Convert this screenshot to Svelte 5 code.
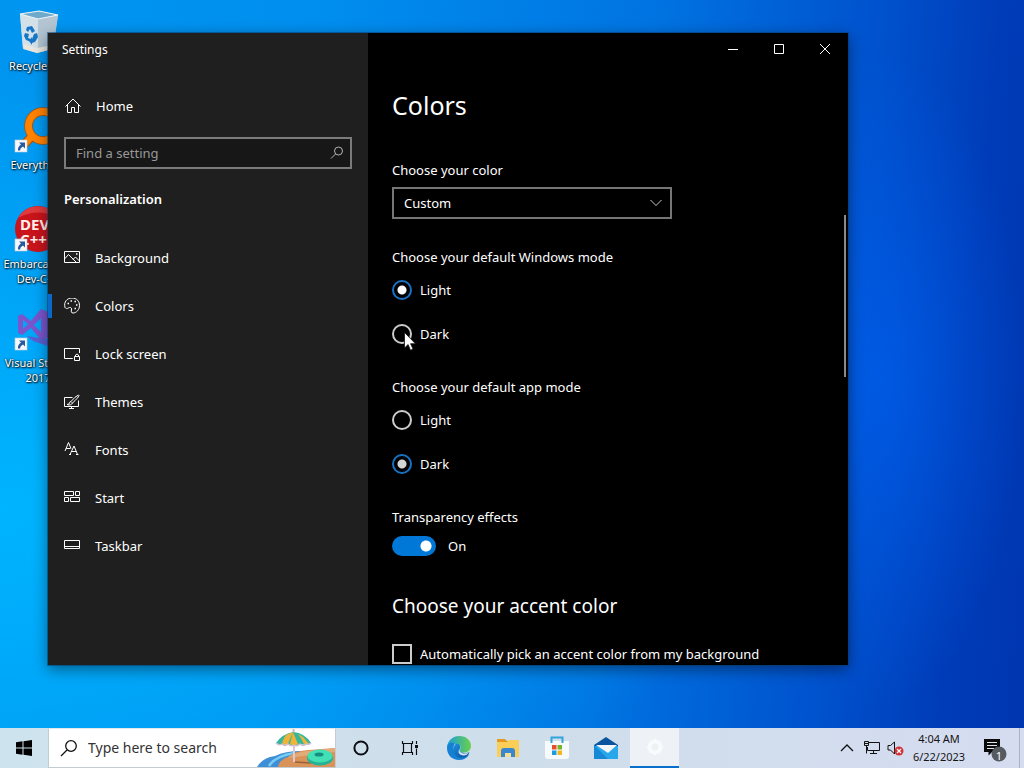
<script>
  let query = $state('');
  let taskQuery = $state('');
  let colorMode = $state('Custom');
  let windowsMode = $state('Light');
  let appMode = $state('Dark');
  let transparency = $state(true);
  let autoAccent = $state(false);

  const nav = ['Background', 'Colors', 'Lock screen', 'Themes', 'Fonts', 'Start', 'Taskbar'];
  const shortcuts = ['Recycle Bin', 'Everything', 'Embarcadero Dev-C++', 'Visual Studio 2017'];
</script>

{#snippet shortcutArrow()}
  <rect x="1" y="34" width="12" height="12" fill="#f6f8fb" stroke="#c3ccd6" stroke-width=".6" />
  <path d="M5 36.500h6v6l-2-2q-3 1.500-3 4h-2q-.5-3.500 3-6z" fill="#26599f" />
{/snippet}

{#snippet modeGroup(title, name, value, set)}
  <fieldset class="group">
    <legend>{title}</legend>
    <div class="choices">
      {#each ['Light', 'Dark'] as option}
        <label class="choice">
          <input type="radio" {name} value={option} checked={value === option} onchange={() => set(option)} />
          <span>{option}</span>
        </label>
      {/each}
    </div>
  </fieldset>
{/snippet}

<div class="screen">
  <main class="desktop">
    <div class="shortcuts">
      {#each shortcuts as name, i}
        <button class="shortcut">
          <svg viewBox="0 0 48 48" width="48" height="48" aria-hidden="true">
            {#if i === 0}
              <g transform="translate(0 2)">
                <path d="M6 5l19-3 19 4-5 34-16 4-14-4z" fill="#c5d5df" />
                <path d="M6 5l18 5v33l-15-4z" fill="#d3e0e8" />
                <path d="M24 10l20-4-5 34-15 3z" fill="#b3c5d2" />
                <path d="M6 5l19-3 19 4-20 4z" fill="#6fa9cc" stroke="#edf5f8" stroke-width="1.200" />
                <path d="M9 35l14 4 16-3-1 4-15 4-13-4z" fill="#e8e6df" />
                <g fill="#1677c9">
                  <path d="M13 18l5-1 3 5-3 2-2-4-2 3-2-2z" />
                  <path d="M11 24l4 1-1 4 3 1v3l-5-2-2-4z" />
                  <path d="M20 25l3-1 1 4-3 5-3 1v2l-3-4 3-4v2z" />
                </g>
              </g>
            {:else if i === 1}
              <circle cx="29" cy="20" r="14.500" fill="none" stroke="#a9500a" stroke-width="8.500" />
              <path d="M19 29L7 42" stroke="#a9500a" stroke-width="9" />
              <circle cx="29" cy="20" r="14.500" fill="none" stroke="#ff8200" stroke-width="7" />
              <path d="M19 29L7 42" stroke="#ff8200" stroke-width="7" />
              {@render shortcutArrow()}
            {:else if i === 2}
              <circle cx="24" cy="24" r="23" fill="#c9141c" />
              <path d="M4 13a23 23 0 0 1 40 0q-20-11-40 0z" fill="#df3a3d" />
              <g class="badge">
                <text x="6" y="25">DEV</text>
                <text x="6" y="40">C++</text>
              </g>
              {@render shortcutArrow()}
            {:else}
              <path fill-rule="evenodd" d="M4 12l4-2 9 7 10-12 10 4v24l-10 3-10-12-9 7-4-2zM9 16v9l5-5zM27 14l-7 7 7 7z" fill="#7a55cc" />
              <path d="M13 32l24 4v7l-18-6z" fill="#5a5fd0" />
              {@render shortcutArrow()}
            {/if}
          </svg>
          <span>{name}</span>
        </button>
      {/each}
    </div>

    <section class="window" aria-label="Settings">
      <aside class="sidebar">
        <div class="caption">Settings</div>
        <button class="home">
          <svg viewBox="0 0 18 18" width="18" height="18" class="line"><path d="M1.500 9.500L9 2l7.500 7.500M3.500 7.500v8h4v-5h3v5h4v-8" /></svg>
          <span>Home</span>
        </button>
        <label class="find">
          <input type="text" placeholder="Find a setting" aria-label="Find a setting" bind:value={query} />
          <svg viewBox="0 0 16 16" width="16" height="16"><circle cx="9.500" cy="6" r="4" fill="none" stroke="#b4b4b4" /><path d="M6.500 9L2 13.500" stroke="#b4b4b4" /></svg>
        </label>
        <h2 class="category">Personalization</h2>
        <nav>
          {#each nav as item}
            <a href="#{item}" class:active={item === 'Colors'}>
              <svg viewBox="0 0 16 16" width="16" height="16" class="line" aria-hidden="true">
                {#if item === 'Background'}
                  <path d="M.5 1.500h15v11H.5zM.5 9l4-4.500 8 8M9 9.500L11.500 7l4 4" /><path d="M12 4h1.500" stroke-width="1.500" />
                {:else if item === 'Colors'}
                  <path d="M1 9.500C-.5 4 3 .0 8 .0s7.500 3.500 7.500 7.500-3 7.500-6.500 7.500c-2 0-2-1.500-1.500-3 .5-1.500-.5-3-2-2.500s-3 2-4.500.0z" />
                  <path d="M3.500 5.500H5M6.500 3H8M10.500 3.500H12M12 7h1.500M10.500 10.500H12" stroke-width="1.700" />
                {:else if item === 'Lock screen'}
                  <path d="M8.500 12.500h-8v-10h15V7M3.500 12.500h5M10.500 10.500h5v4h-5zM11.500 10.500V9q1.500-2 3 0v1.500" />
                {:else if item === 'Themes'}
                  <path d="M8.500 3.500h-8v9h14v-6M7.500 12.500v2M5 14.500h5" />
                  <path d="M14.500 1Q11 2.500 7 7.500l1.500 1.500Q14 4 15 1.500zM7 7.500Q5 8 5 10l-2 .5q4 1.500 5.500-1.500" />
                {:else if item === 'Fonts'}
                  <path d="M1 9L4.500.5 7 6.500M2 6.500h4.500M6 12.500L10 4l3.500 8.500M7.500 9.500h5M5 12.500h2M12 12.500h2.500" />
                {:else if item === 'Start'}
                  <path d="M.5 1.500h9v4h-9zM11.500 1.500h4v4h-4zM.5 7.500h4v4h-4zM6.500 7.500h9v4h-9z" />
                {:else}
                  <path d="M.5 2.500h15v8H.5zM.5 8.500h15" />
                {/if}
              </svg>
              <span>{item}</span>
            </a>
          {/each}
        </nav>
      </aside>

      <div class="pane">
        <div class="controls">
          <button aria-label="Minimize"><svg viewBox="0 0 10 10" width="10" height="10"><path d="M0 5.500h10" /></svg></button>
          <button aria-label="Maximize"><svg viewBox="0 0 10 10" width="10" height="10"><path d="M.5.5h9v9h-9z" /></svg></button>
          <button aria-label="Close"><svg viewBox="0 0 10 10" width="10" height="10"><path d="M0 0l10 10M10 0L0 10" /></svg></button>
        </div>
        <div class="content">
          <h1>Colors</h1>
          <div class="group">
            <label for="color-mode">Choose your color</label>
            <div class="dropdown">
              <select id="color-mode" bind:value={colorMode}>
                <option>Light</option>
                <option>Dark</option>
                <option>Custom</option>
              </select>
              <svg viewBox="0 0 12 8" width="12" height="8"><path d="M.5 1L6 6.500 11.500 1" fill="none" stroke="#c8c8c8" /></svg>
            </div>
          </div>
          {@render modeGroup('Choose your default Windows mode', 'windows-mode', windowsMode, (v) => (windowsMode = v))}
          {@render modeGroup('Choose your default app mode', 'app-mode', appMode, (v) => (appMode = v))}
          <div class="group">
            <span id="transparency">Transparency effects</span>
            <label class="toggle">
              <input type="checkbox" role="switch" aria-labelledby="transparency" bind:checked={transparency} />
              <span>{transparency ? 'On' : 'Off'}</span>
            </label>
          </div>
          <h2>Choose your accent color</h2>
          <label class="check">
            <input type="checkbox" bind:checked={autoAccent} />
            <span>Automatically pick an accent color from my background</span>
          </label>
        </div>
        <div class="scrollbar"></div>
      </div>
    </section>

    <svg class="pointer" viewBox="0 0 12 19" width="12" height="19" aria-hidden="true">
      <path d="M.5.5v15.500l3.600-3.400 2.400 5.600 2.500-1.100-2.400-5.400h4.900z" fill="#fff" stroke="#111" stroke-width=".8" />
    </svg>
  </main>

  <footer class="taskbar">
    <button class="start" aria-label="Start">
      <svg viewBox="0 0 16 16" width="16" height="16"><path d="M0 2.200L6.500 1.300v6.200H0zM7.500 1.200L16 0v7.500H7.500zM0 8.500h6.500v6.200L0 13.800zM7.500 8.500H16V16l-8.500-1.200z" /></svg>
    </button>
    <label class="search">
      <svg viewBox="0 0 18 18" width="18" height="18"><circle cx="11" cy="7" r="5.300" fill="none" stroke="#111" stroke-width="1.300" /><path d="M7 11l-6 6" stroke="#111" stroke-width="1.300" /></svg>
      <input type="text" placeholder="Type here to search" aria-label="Type here to search" bind:value={taskQuery} />
      <svg class="beach" viewBox="0 0 78 38" width="78" height="38" aria-hidden="true">
        <path d="M0 38q5-9 18-11 10-5 26-5l-12 16z" fill="#3f8fd6" />
        <path d="M12 37q6-10 26-13" fill="none" stroke="#79cdf3" stroke-width="2.500" />
        <path d="M21 38q1-7 10-10 6-6 21-7l26-2v19z" fill="#d99257" />
        <path d="M31 29q10-7 21-7l26-3v4z" fill="#e3ab77" />
        <path d="M38 33l16 1" stroke="#98613c" stroke-width="1.500" />
        <path d="M37 13v20" stroke="#e2c6d0" stroke-width="2" />
        <path d="M36.500 0v4" stroke="#cbb7d1" stroke-width="2" />
        <path d="M19 14Q25 5 36 3q12 1 18 11l-5 2-6-1-6 2-6-2-7 1z" fill="#36b79b" />
        <path d="M29 6l7-3-5 12-5 1q-2-3 3-10zM36 3l5 12-4 2-4-2zM41 5l5 3 6 7-5 0q-2-5-6-10z" fill="#efb437" />
        <path d="M19 14q3 3 6 1 3 3 6 0 3 3 6 1 3 2 6-1 3 3 6 0 3 1 5-1" fill="none" stroke="#d0bdce" stroke-width="1.500" />
        <ellipse cx="63" cy="29" rx="13" ry="7.500" fill="#24b394" />
        <ellipse cx="63" cy="27" rx="12.500" ry="6.500" fill="#43dfb5" />
        <ellipse cx="62" cy="25.500" rx="4.500" ry="2" fill="#188e83" />
      </svg>
    </label>
    <div class="apps">
      <button aria-label="Cortana"><svg viewBox="0 0 16 16" width="16" height="16"><circle cx="8" cy="8" r="6.600" fill="none" stroke="#0b0f14" stroke-width="2" /></svg></button>
      <button aria-label="Task View"><svg viewBox="0 0 18 16" width="18" height="16" fill="none" stroke="#0b0f14" stroke-width="1.200"><path d="M1.500 1v2.500h10V1M1.500 15v-2.500h10V15M2.500 3.500v9M10.500 3.500v9M15.500 1v3M15.500 8.500V15" /><path d="M14 6.500h3" stroke-width="3" /></svg></button>
      <button aria-label="Microsoft Edge">
        <svg viewBox="0 0 24 24" width="24" height="24">
          <defs>
            <linearGradient id="edge-top" x1="0" x2="1"><stop offset="0" stop-color="#1a9edb" /><stop offset="1" stop-color="#6bd04a" /></linearGradient>
            <linearGradient id="edge-low" x1="0" y1="0" x2="1" y2="1"><stop offset="0" stop-color="#1a8fdd" /><stop offset="1" stop-color="#0b4f9e" /></linearGradient>
          </defs>
          <path d="M0 11C1 4 6 0 12 0c8 0 12 5 12 10 0 4-3 6.500-7 6.500-3 0-5-1-4-3 1-2 1-4-2-5S2 7 0 11z" fill="url(#edge-top)" />
          <path d="M0 12c0-5 5-6 8-4.500C5 11 7 18 12 20q5 2 10-1-3.500 5-10 5C5 24 0 19 0 12z" fill="#1580d4" />
          <path d="M8.500 8C12 7 14 10 13 12.500s0 4 4 4.500q3 .5 5.500-1-.5 3-3 4.500C11 25 2 17 8.500 8z" fill="url(#edge-low)" />
          <path d="M13 12q-2 4 3 5.500 4 .5 6.500-1.500-3 4-6.500 3.500Q9 18 13 12z" fill="#d5e8f2" />
        </svg>
      </button>
      <button aria-label="File Explorer">
        <svg viewBox="0 0 24 24" width="24" height="24"><path d="M1 3h8l2 2h11v4H1z" fill="#e29a20" /><path d="M1 6h10l2-2h10v17H1z" fill="#fbcf57" /><path d="M5 21v-6q0-3 3-3h8q3 0 3 3v6h-4v-4H9v4z" fill="#3887cf" /><path d="M9 17h6v4H9z" fill="#f5dd92" /></svg>
      </button>
      <button aria-label="Microsoft Store">
        <svg viewBox="0 0 24 24" width="24" height="24"><path d="M6.500 7V1.500h11V7" fill="none" stroke="#31a4dc" stroke-width="2" /><path d="M0 5h24v15q0 3-3 3H3q-3 0-3-3z" fill="#f7fafc" /><path d="M7 9h4.500v4.500H7z" fill="#e84e27" /><path d="M12.500 9H17v4.500h-4.500z" fill="#79b52a" /><path d="M7 14.500h4.500V19H7z" fill="#1c9ce4" /><path d="M12.500 14.500H17V19h-4.500z" fill="#f5b51b" /><path d="M5.500 5h2v2h-2zM16.500 5h2v2h-2z" fill="#31a4dc" /></svg>
      </button>
      <button aria-label="Mail">
        <svg viewBox="0 0 24 24" width="24" height="24"><path d="M0 9L12 1l12 8v14H0z" fill="#0b559f" /><path d="M0 10h24v13H0z" fill="#28a8ea" /><path d="M2 9h21l-9 8z" fill="#f4f8fb" /><path d="M0 9l14 14H0z" fill="#1688d5" /></svg>
      </button>
      <button class="running" aria-label="Settings">
        <svg viewBox="0 0 18 18" width="18" height="18"><circle cx="9" cy="9" r="5.500" fill="none" stroke="#f9fafc" stroke-width="4" /><path d="M9 1v2M9 15v2M1 9h2M15 9h2M3.500 3.500l2 2M12.500 12.500l2 2M14.500 3.500l-2 2M5.500 12.500l-2 2" stroke="#f9fafc" stroke-width="2" /></svg>
      </button>
    </div>
    <div class="tray">
      <button aria-label="Show hidden icons"><svg viewBox="0 0 14 8" width="14" height="8"><path d="M1 7l6-6 6 6" fill="none" stroke="#111" stroke-width="1.300" /></svg></button>
      <button aria-label="Network"><svg viewBox="0 0 17 16" width="17" height="16" fill="none" stroke="#111"><path d="M5.500 2.500h11v8h-12V7M10.500 10.500v3M7 13.500h7M1.500 1.500h4v4h-4zM3.500 5.500v8M2 3.500h3" /></svg></button>
      <button aria-label="Volume"><svg viewBox="0 0 17 16" width="17" height="16"><path d="M1 5.500h2.500L7.500 2v12L3.500 10H1z" fill="none" stroke="#111" /><circle cx="12" cy="11" r="4.500" fill="#d03438" /><path d="M10 9l4 4M14 9l-4 4" stroke="#fff" stroke-width="1.200" /></svg></button>
      <button class="clock"><time>4:04 AM</time><span>6/22/2023</span></button>
      <button class="notice" aria-label="Notifications">
        <svg viewBox="0 0 24 26" width="24" height="26"><path d="M1 1h16v13H9l-3.500 3.500V14H1z" fill="#0a0a0a" /><path d="M4 4.500h10M4 7.500h10M4 10.500h7" stroke="#dce4f1" /><circle cx="16" cy="16" r="7.500" fill="#555a60" /></svg>
        <span>1</span>
      </button>
    </div>
  </footer>
</div>

<style>
  :global(body) { margin: 0; }
  .screen {
    display: flex;
    flex-direction: column;
    height: 100vh;
    overflow: hidden;
    font-family: "Noto Sans", "Open Sans", sans-serif;
    font-size: 13px;
    line-height: 20px;
    color: #fff;
  }
  button, input, select { font: inherit; color: inherit; }
  button { padding: 0; border: 0; background: none; }
  h1, h2 { margin: 0; }
  .desktop {
    position: relative;
    flex: 1;
    min-height: 0;
    background:
      radial-gradient(ellipse 14% 45% at 86% 52%, #0060f0aa, #0060f000),
      radial-gradient(ellipse 70% 60% at 0% 70%, #00b4ff, #00b4ff00),
      linear-gradient(95deg, #0096f0, #008eee 30%, #0074e2 60%, #0050cc 82%, #003cb8 92%, #0036b0);
  }
  .shortcuts { width: 76px; padding-top: 7px; }
  .shortcut {
    display: flex;
    flex-direction: column;
    align-items: center;
    width: 76px;
    height: 99px;
    font-size: 11px;
    line-height: 15px;
    color: #fff;
    text-shadow: 1px 1px 2px #000, 0 0 2px #000;
  }
  .shortcut svg { margin-bottom: 3px; flex: none; }
  .badge { font-size: 15px; font-weight: 700; line-height: 15px; fill: #fff0ea; text-shadow: none; }
  .window {
    position: absolute;
    inset: 33px 176px 63px 48px;
    display: grid;
    grid-template-columns: 2fr 3fr;
    background: #000;
    box-shadow: 0 0 0 1px #063b6d88, 0 4px 14px #0007;
    overflow: hidden;
  }
  .sidebar { background: #1f1f1f; }
  .caption { padding: 7px 14px; font-size: 12px; }
  .home {
    display: flex;
    align-items: center;
    gap: 14px;
    width: 100%;
    height: 48px;
    margin-top: 15px;
    padding: 0 16px;
  }
  .line { flex: none; fill: none; stroke: #fff; }
  .find {
    display: flex;
    align-items: center;
    height: 28px;
    margin: 7px 16px 0;
    padding-right: 5px;
    border: 2px solid #7b7b7b;
    background: #171717;
  }
  .find input {
    flex: 1;
    min-width: 0;
    padding: 0 10px;
    border: 0;
    outline: 0;
    background: none;
  }
  .find input::placeholder { color: #999; opacity: 1; }
  .category { margin: 20px 16px 0; font-size: 13px; font-weight: 600; }
  nav { display: flex; flex-direction: column; margin-top: 25px; }
  nav a {
    position: relative;
    display: flex;
    align-items: center;
    gap: 15px;
    height: 48px;
    padding: 0 16px;
    color: inherit;
    text-decoration: none;
  }
  .active::before {
    content: "";
    position: absolute;
    left: 0;
    width: 4px;
    height: 24px;
    background: #0869c9;
  }
  .pane {
    position: relative;
    display: flex;
    flex-direction: column;
    min-width: 0;
    overflow: hidden;
  }
  .controls { display: flex; justify-content: flex-end; }
  .controls button {
    display: grid;
    place-items: center;
    width: 46px;
    height: 32px;
  }
  .controls path { fill: none; stroke: #fff; }
  .content { padding: 22px 24px 0; }
  h1 { margin-bottom: 37px; font-size: 25px; font-weight: 400; line-height: 36px; }
  .group { margin: 0 0 33px; padding: 0; border: 0; }
  .group > label, .group > span, legend { display: block; padding: 0; }
  .dropdown {
    position: relative;
    width: 280px;
    max-width: 100%;
    margin: 7px 0 -5px;
  }
  .dropdown select {
    display: block;
    width: 100%;
    height: 32px;
    padding: 0 10px;
    border: 2px solid #767676;
    border-radius: 0;
    appearance: none;
    background: #000;
  }
  .dropdown svg { position: absolute; right: 10px; top: 12px; pointer-events: none; }
  .choices { display: grid; gap: 24px; padding-top: 13px; }
  .choice, .check, .toggle { display: flex; align-items: center; gap: 8px; }
  .choice input, .check input {
    flex: none;
    width: 20px;
    height: 20px;
    margin: 0;
    border: 2px solid #ccc;
    appearance: none;
  }
  .choice input { border-radius: 50%; }
  .choice input:checked {
    border-color: #1872c4;
    background: radial-gradient(circle, #d4d4d4 4px, transparent 5px);
  }
  .choice input[name="windows-mode"]:checked {
    background: radial-gradient(circle, #fff 4px, transparent 5px);
  }
  .check input:checked { background: #0078d7; }
  .group > .toggle { display: flex; gap: 12px; margin-top: 9px; }
  .toggle input {
    flex: none;
    width: 44px;
    height: 20px;
    margin: 0;
    border-radius: 10px;
    appearance: none;
    background: radial-gradient(circle at 10px, #fff 5px, transparent 6px) #444;
  }
  .toggle input:checked { background: radial-gradient(circle at 34px, #fff 5px, transparent 6px) #0078d7; }
  .content h2 { margin: 36px 0 24px; font-size: 19px; font-weight: 400; line-height: 28px; }
  .scrollbar {
    position: absolute;
    right: 2px;
    top: 182px;
    width: 2px;
    height: 162px;
    background: #8a8a8a;
  }
  .pointer { position: absolute; left: 404px; top: 332px; }
  .taskbar {
    display: flex;
    height: 40px;
    background: linear-gradient(90deg, #cde3ee, #cfdeeb 50%, #d5dcf0);
    color: #151515;
  }
  .taskbar button { display: grid; place-items: center; }
  .start { width: 48px; }
  .search {
    display: flex;
    align-items: center;
    flex: 0 1 288px;
    box-sizing: border-box;
    min-width: 0;
    padding-left: 11px;
    border: 1px solid #c3ccd2;
    border-top-color: #e2e8ec;
    background: #fff;
  }
  .search svg { flex: none; }
  .search input {
    flex: 1;
    min-width: 0;
    padding: 0 10px;
    border: 0;
    outline: 0;
    background: none;
    font-size: 14px;
  }
  .search input::placeholder { color: #333; opacity: 1; }
  .apps { display: flex; }
  .apps button { width: 49px; }
  .apps .running { background: #eef1f6; border-bottom: 2px solid #0870cc; }
  .tray { display: flex; margin-left: auto; margin-right: 4px; border-right: 1px solid #a9b3c4; }
  .tray button { width: 24px; }
  .tray .clock {
    width: 64px;
    align-content: center;
    font-size: 11px;
    line-height: 18px;
  }
  .tray .notice {
    width: 48px;
    padding-top: 6px;
    align-content: center;
  }
  .notice svg, .notice span { grid-area: 1 / 1; }
  .notice span { padding: 10px 0 0 8px; color: #fff; font-size: 11px; line-height: 16px; }
</style>
